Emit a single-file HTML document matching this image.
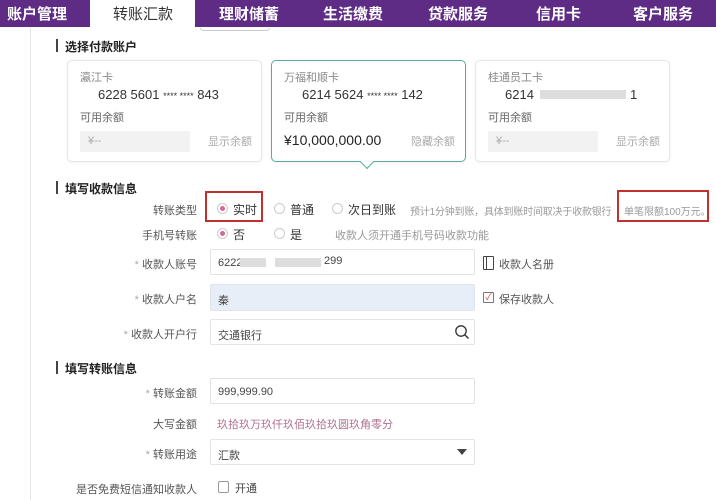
<!DOCTYPE html>
<html><head><meta charset="utf-8">
<style>
*{margin:0;padding:0;box-sizing:border-box}
body{width:716px;height:500px;overflow:hidden;background:#fff;font-family:"Liberation Sans","Noto Sans CJK SC",sans-serif;position:relative;color:#333}
.a{position:absolute;white-space:nowrap}
.nav{position:absolute;left:0;top:0;width:716px;height:27px;background:#5e2c85}
.tab{position:absolute;top:3px;font-size:15px;color:#fff;font-weight:bold}
.act{position:absolute;left:90px;top:0;width:105px;height:28px;background:#fff}
.h{font-size:12px;color:#222;font-weight:bold}
.bar{position:absolute;width:2px;height:13px;background:#444}
.card{position:absolute;top:60px;width:195px;height:102px;border:1px solid #e6e6e6;border-radius:5px;background:#fff;box-shadow:0 1px 3px rgba(0,0,0,.06)}
.s{font-size:11px;color:#888}
.n{font-size:13px;color:#333}
.lbl{font-size:11px;color:#555;text-align:right;width:120px}
.inp{position:absolute;left:210px;width:265px;height:26px;border:1px solid #e3e3e3;border-radius:2px;font-size:11px;color:#444;padding:7px 0 0 7px;background:#fff}
.rad{position:absolute;width:11px;height:11px;border:1px solid #ccc;border-radius:50%;background:#fff}
.rad.on::after{content:"";position:absolute;left:2px;top:2px;width:5px;height:5px;border-radius:50%;background:#d5679a}
.red{position:absolute;border:2px solid #c0302f}
.gb{position:absolute;background:#ddd;height:9px}
</style></head><body>
<div class="nav"></div>
<div class="act"></div>
<div class="tab" style="left:7px">账户管理</div>
<div class="tab" style="left:113px;color:#333;font-weight:normal">转账汇款</div>
<div class="tab" style="left:219px">理财储蓄</div>
<div class="tab" style="left:323px">生活缴费</div>
<div class="tab" style="left:428px">贷款服务</div>
<div class="tab" style="left:536px">信用卡</div>
<div class="tab" style="left:633px">客户服务</div>
<div class="a" style="left:200px;top:28px;width:70px;height:3px;border-bottom:1px solid #ccc;border-left:1px solid #ccc;border-right:1px solid #ccc;border-radius:0 0 3px 3px"></div>
<div class="a" style="left:30px;top:27px;width:1px;height:473px;background:#e4e4e4"></div>

<div class="bar" style="left:56px;top:39px"></div>
<div class="a h" style="left:65px;top:38px">选择付款账户</div>

<div class="card" style="left:67px"></div>
<div class="a s" style="left:80px;top:69px">瀛江卡</div>
<div class="a n" style="left:98px;top:87px">6228 5601 <span style="font-size:9px">**** ****</span> 843</div>
<div class="a s" style="left:80px;top:109px;color:#666">可用余额</div>
<div class="a" style="left:80px;top:131px;width:110px;height:21px;background:#f2f2f2"></div>
<div class="a s" style="left:88px;top:135px;color:#aaa">¥--</div>
<div class="a s" style="left:208px;top:133px;color:#aaa">显示余额</div>

<div class="card" style="left:271px;border-color:#5aa9a3"></div>
<div class="a" style="left:362px;top:157px;width:10px;height:10px;background:#fff;border-right:1px solid #5aa9a3;border-bottom:1px solid #5aa9a3;transform:rotate(45deg)"></div>
<div class="a s" style="left:284px;top:69px">万福和顺卡</div>
<div class="a n" style="left:302px;top:87px">6214 5624 <span style="font-size:9px">**** ****</span> 142</div>
<div class="a s" style="left:284px;top:109px;color:#666">可用余额</div>
<div class="a" style="left:284px;top:132px;font-size:14px;color:#222">¥10,000,000.00</div>
<div class="a s" style="left:411px;top:133px;color:#aaa">隐藏余额</div>

<div class="card" style="left:475px"></div>
<div class="a s" style="left:488px;top:69px">桂通员工卡</div>
<div class="a n" style="left:505px;top:87px">6214</div>
<div class="gb" style="left:540px;top:90px;width:86px"></div>
<div class="a n" style="left:630px;top:87px">1</div>
<div class="a s" style="left:488px;top:109px;color:#666">可用余额</div>
<div class="a" style="left:488px;top:131px;width:110px;height:21px;background:#f2f2f2"></div>
<div class="a s" style="left:496px;top:135px;color:#aaa">¥--</div>
<div class="a s" style="left:616px;top:133px;color:#aaa">显示余额</div>

<div class="bar" style="left:56px;top:181px"></div>
<div class="a h" style="left:65px;top:180px">填写收款信息</div>

<div class="a lbl" style="left:77px;top:202px">转账类型</div>
<div class="rad on" style="left:217px;top:203px"></div><div class="a" style="left:233px;top:201px;font-size:12px">实时</div>
<div class="red" style="left:205px;top:191px;width:58px;height:31px"></div>
<div class="rad" style="left:274px;top:203px"></div><div class="a" style="left:290px;top:201px;font-size:12px">普通</div>
<div class="rad" style="left:332px;top:203px"></div><div class="a" style="left:348px;top:201px;font-size:12px">次日到账</div>
<div class="a" style="left:410px;top:203px;color:#999;font-size:10px;letter-spacing:-0.2px">预计1分钟到账，具体到账时间取决于收款银行</div>
<div class="a" style="left:624px;top:203px;color:#999;font-size:10px">单笔限额100万元。</div>
<div class="red" style="left:617px;top:190px;width:92px;height:32px"></div>

<div class="a lbl" style="left:77px;top:227px">手机号转账</div>
<div class="rad on" style="left:217px;top:228px"></div><div class="a" style="left:233px;top:226px;font-size:12px">否</div>
<div class="rad" style="left:274px;top:228px"></div><div class="a" style="left:290px;top:226px;font-size:12px">是</div>
<div class="a s" style="left:335px;top:227px;color:#999">收款人须开通手机号码收款功能</div>

<div class="a lbl" style="left:77px;top:256px"><span style="color:#aaa">* </span>收款人账号</div>
<div class="inp" style="top:249px">6222</div>
<div class="gb" style="left:240px;top:258px;width:26px"></div>
<div class="gb" style="left:275px;top:258px;width:46px"></div>
<div class="a" style="left:324px;top:255px;font-size:11px;color:#444">299</div>
<div class="a" style="left:483px;top:256px;width:11px;height:14px;border:1px solid #444;border-radius:1px"></div>
<div class="a" style="left:486px;top:256px;width:1px;height:14px;background:#444"></div>
<div class="a s" style="left:499px;top:256px;color:#555">收款人名册</div>

<div class="a lbl" style="left:77px;top:291px"><span style="color:#aaa">* </span>收款人户名</div>
<div class="inp" style="top:284px;height:27px;background:#e8eef8;border-color:#dde4ee">秦</div>
<div class="a" style="left:483px;top:292px;width:11px;height:11px;border:1px solid #777;border-radius:1px;font-size:9px;line-height:9px;text-align:center;color:#c44">✓</div>
<div class="a s" style="left:499px;top:291px;color:#555">保存收款人</div>

<div class="a lbl" style="left:77px;top:326px"><span style="color:#aaa">* </span>收款人开户行</div>
<div class="inp" style="top:319px">交通银行</div>
<svg class="a" style="left:454px;top:324px" width="16" height="16" viewBox="0 0 16 16"><circle cx="7" cy="7" r="5.2" fill="none" stroke="#333" stroke-width="1.3"/><path d="M11 11l3.5 3.5" stroke="#333" stroke-width="1.4"/></svg>

<div class="bar" style="left:56px;top:361px"></div>
<div class="a h" style="left:65px;top:360px">填写转账信息</div>

<div class="a lbl" style="left:77px;top:385px"><span style="color:#aaa">* </span>转账金额</div>
<div class="inp" style="top:378px">999,999.90</div>
<div class="a lbl" style="left:77px;top:416px">大写金额</div>
<div class="a s" style="left:217px;top:416px;color:#b07090">玖拾玖万玖仟玖佰玖拾玖圆玖角零分</div>
<div class="a lbl" style="left:77px;top:446px"><span style="color:#aaa">* </span>转账用途</div>
<div class="inp" style="top:439px">汇款</div>
<div class="a" style="left:457px;top:449px;width:0;height:0;border-left:5px solid transparent;border-right:5px solid transparent;border-top:6px solid #444"></div>
<div class="a lbl" style="left:57px;top:481px;width:140px">是否免费短信通知收款人</div>
<div class="a" style="left:218px;top:481px;width:11px;height:12px;border:1px solid #999;border-radius:2px"></div>
<div class="a" style="left:235px;top:480px;font-size:11px;color:#444">开通</div>
</body></html>
